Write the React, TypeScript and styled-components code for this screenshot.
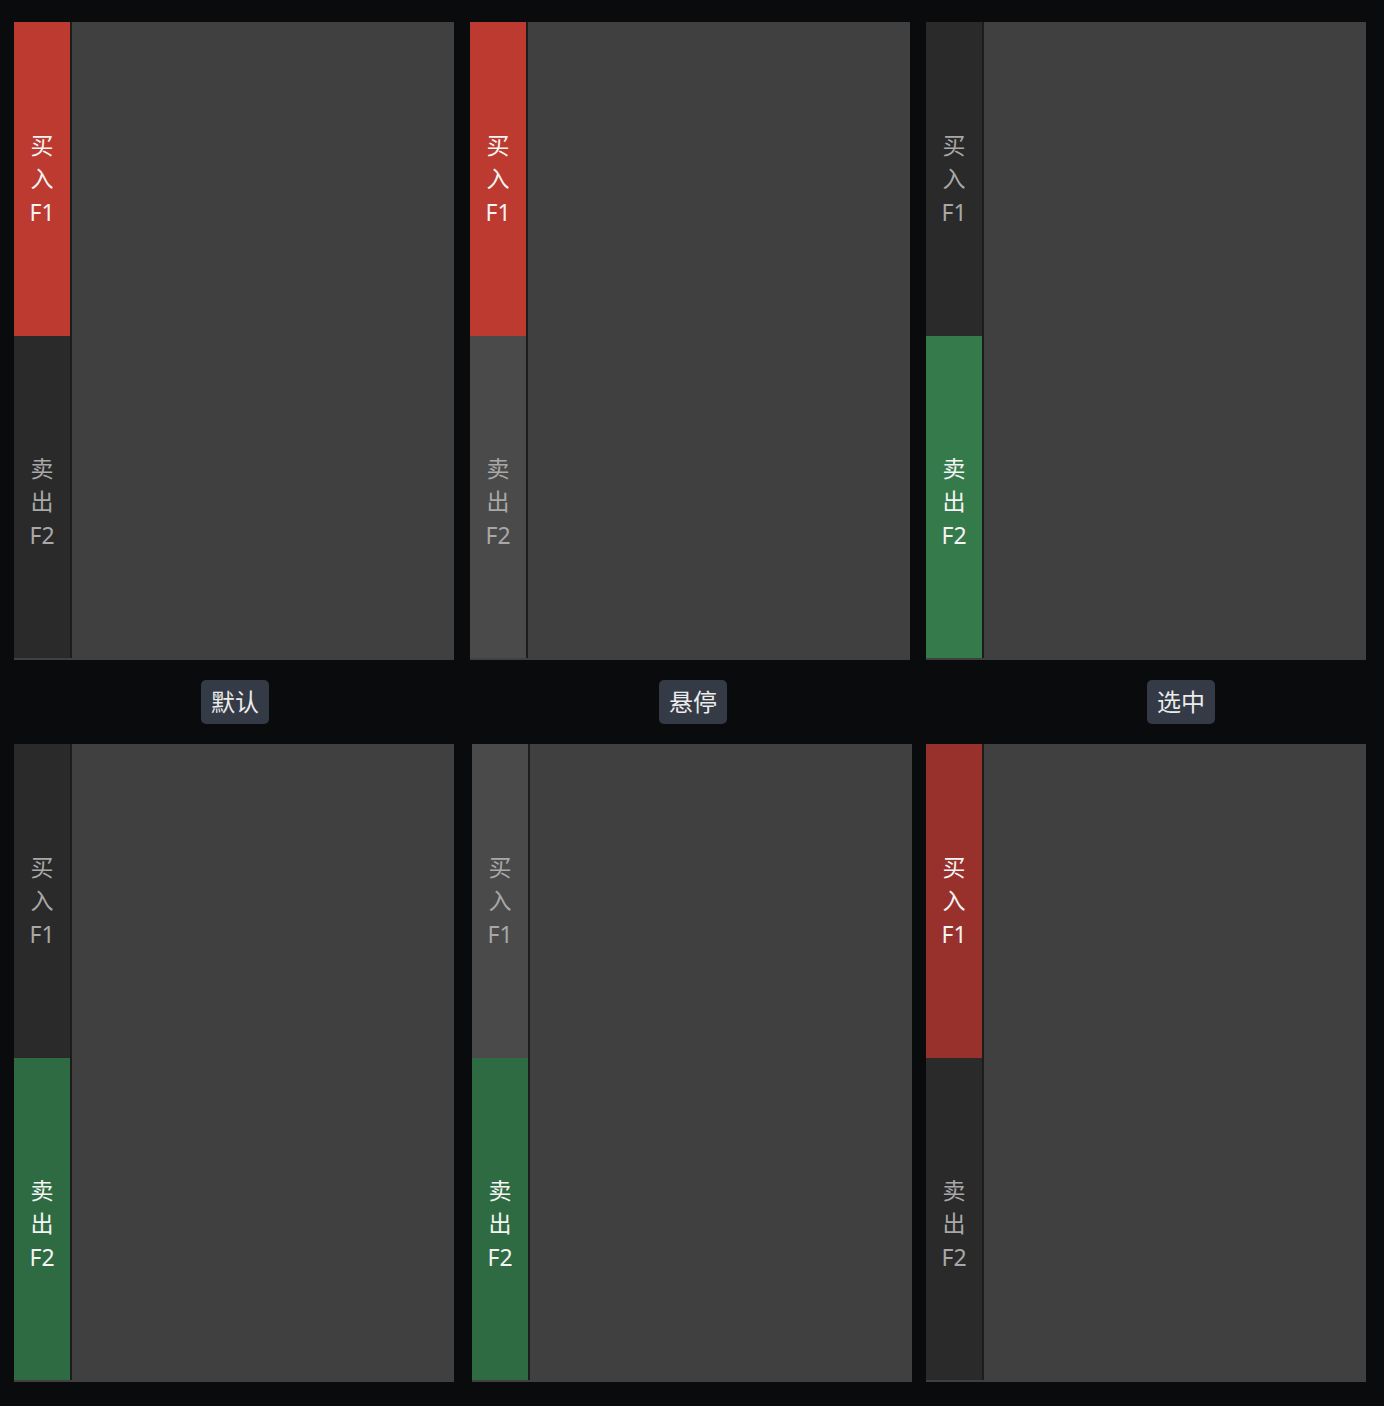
import styled, { createGlobalStyle } from "styled-components";

const Global = createGlobalStyle`
  html, body {
    margin: 0;
    padding: 0;
    background: #0a0b0d;
  }
  body {
    font-family: "Noto Sans", "Noto Sans CJK SC", sans-serif;
  }
`

const Page = styled.div`
  width: 1384px;
  height: 1406px;
  box-sizing: border-box;
  padding: 22px 0 0 14px;
  background: #0a0b0d;
`

const Row = styled.div`
  display: grid;
  grid-template-columns: repeat(3, 440px);
  column-gap: 16px;
`

const Panel = styled.div<{ $shift?: number }>`
  display: flex;
  height: 638px;
  background: #404040;
  margin-left: ${p => p.$shift || 0}px;
  margin-right: ${p => -(p.$shift || 0)}px;
`

const Sidebar = styled.div`
  display: flex;
  flex-direction: column;
  width: 56px;
  height: 636px;
  border-right: 2px solid #1c1c1c;
`

const SideButton = styled.div<{ $bg: string; $active: boolean; $h: number; $pt?: number }>`
  display: flex;
  flex-direction: column;
  align-items: center;
  justify-content: center;
  height: ${p => p.$h}px;
  box-sizing: border-box;
  padding-top: ${p => p.$pt || 0}px;
  background: ${p => p.$bg};
  color: ${p => (p.$active ? "#f4f4f4" : "#a8a8a8")};
  font-size: 23px;
  line-height: 33.5px;
  span {
    display: block;
  }
`

const Main = styled.div`
  flex: 1;
  background: #404040;
  height: 638px;
`

const LabelRow = styled.div`
  display: grid;
  grid-template-columns: repeat(3, 440px);
  column-gap: 16px;
  height: 84px;
  align-items: center;
`

const LabelCell = styled.div<{ $offset: number }>`
  display: flex;
  padding-left: ${p => p.$offset}px;
`

const Label = styled.div`
  background: #343a46;
  color: #ececec;
  font-size: 24px;
  line-height: 32px;
  padding: 6px 10px;
  border-radius: 5px;
`

type Side = { bg: string; active: boolean }
type Cell = { buy: Side; sell: Side; shift?: number }

const red = "#bc3a30"
const redDark = "#98302c"
const green = "#357a4b"
const greenDark = "#2e6b43"
const idle = "#2a2a2a"
const hover = "#4a4a4a"

const top: Cell[] = [
    { buy: { bg: red, active: true }, sell: { bg: idle, active: false } },
    { buy: { bg: red, active: true }, sell: { bg: hover, active: false } },
    { buy: { bg: idle, active: false }, sell: { bg: green, active: true } },
]

const bottom: Cell[] = [
    { buy: { bg: idle, active: false }, sell: { bg: greenDark, active: true } },
    { buy: { bg: hover, active: false }, sell: { bg: greenDark, active: true }, shift: 2 },
    { buy: { bg: redDark, active: true }, sell: { bg: idle, active: false } },
]

const labels = [
    { text: "默认", offset: 187 },
    { text: "悬停", offset: 189 },
    { text: "选中", offset: 221 },
]

function TradePanel({ cell }: { cell: Cell }) {
    return (
        <Panel $shift={cell.shift}>
            <Sidebar>
                <SideButton $bg={cell.buy.bg} $active={cell.buy.active} $h={314}>
                    <span>买</span>
                    <span>入</span>
                    <span>F1</span>
                </SideButton>
                <SideButton $bg={cell.sell.bg} $active={cell.sell.active} $h={322} $pt={10}>
                    <span>卖</span>
                    <span>出</span>
                    <span>F2</span>
                </SideButton>
            </Sidebar>
            <Main />
        </Panel>
    )
}

export default function App() {
    return (
        <Page>
            <Global />
            <Row>
                {top.map((c, i) => <TradePanel key={i} cell={c} />)}
            </Row>
            <LabelRow>
                {labels.map(l => (
                    <LabelCell key={l.text} $offset={l.offset}>
                        <Label>{l.text}</Label>
                    </LabelCell>
                ))}
            </LabelRow>
            <Row>
                {bottom.map((c, i) => <TradePanel key={i} cell={c} />)}
            </Row>
        </Page>
    )
}
